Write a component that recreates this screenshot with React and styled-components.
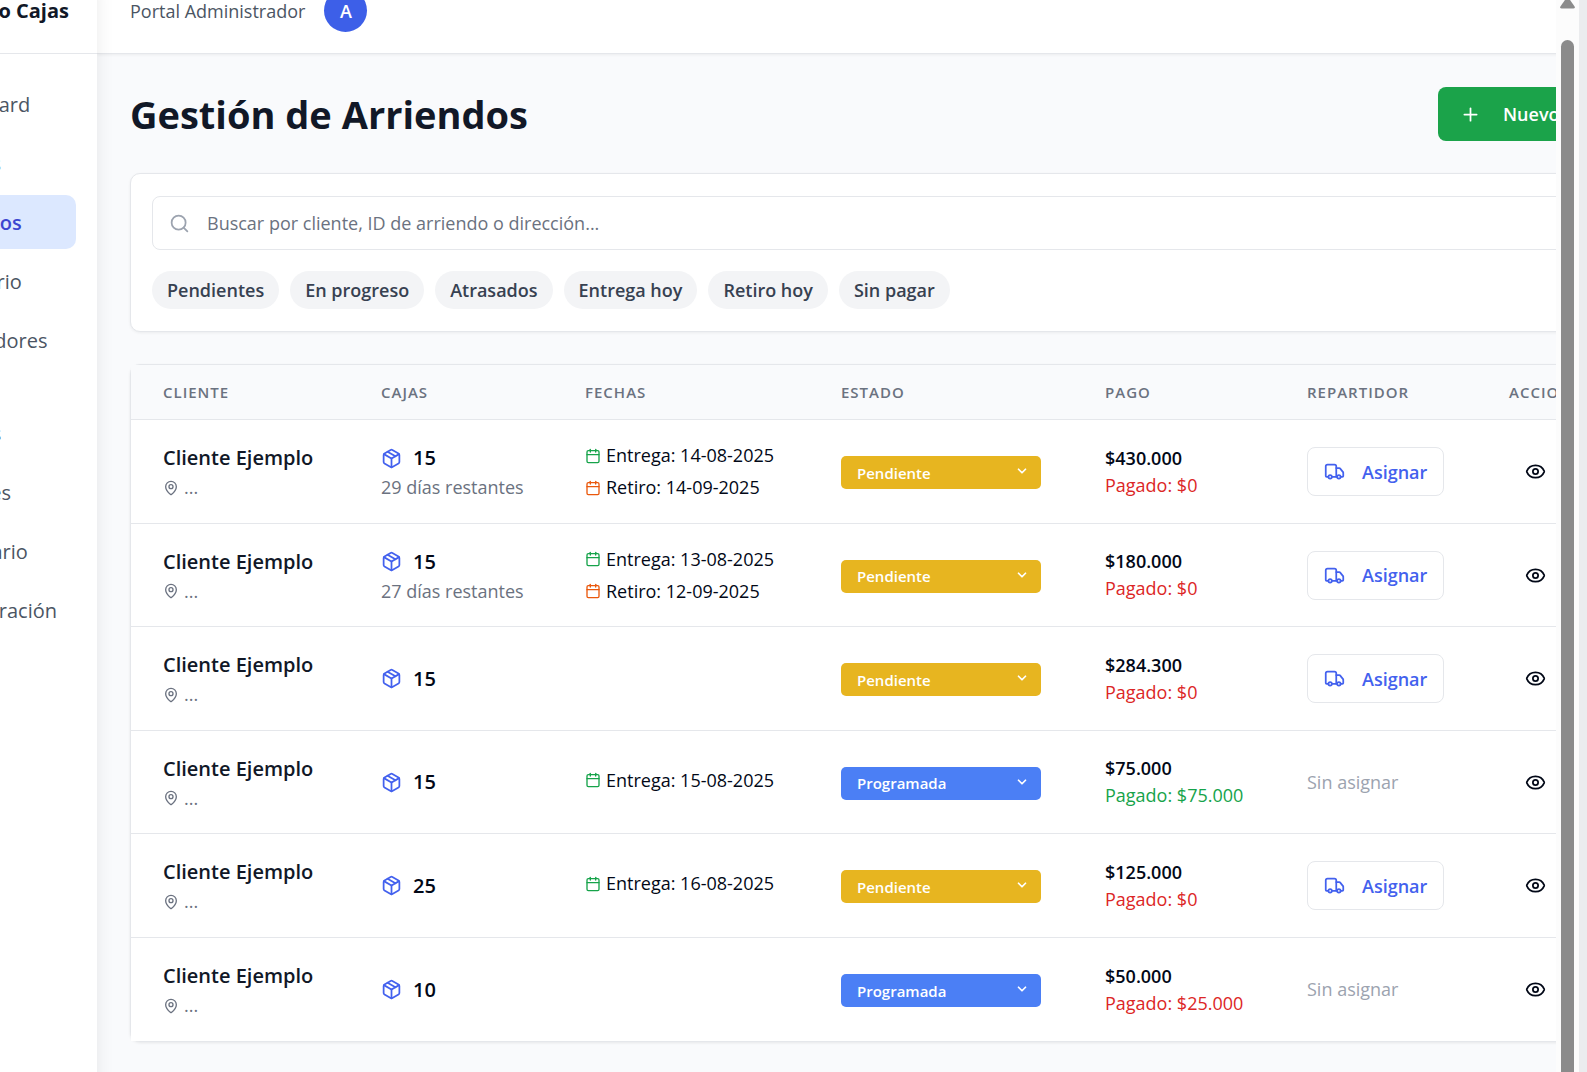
import React from "react";
import styled, { createGlobalStyle } from "styled-components";
import {
  Calendar,
  ChevronDown,
  Eye,
  MapPin,
  Package,
  Plus,
  Search,
  Truck,
} from "lucide-react";

const GlobalStyle = createGlobalStyle`
  *, *::before, *::after { box-sizing: border-box; }
  body {
    margin: 0;
    font-family: "Open Sans", "Noto Sans", sans-serif;
    color: #020817;
    background: #f9fafb;
  }
  button, input, select { font-family: inherit; }
  svg { flex: none; }
`;

const Window = styled.div`
  display: flex;
  height: 100vh;
  overflow: hidden;
`;

const ScrollArea = styled.div`
  flex: 1;
  min-width: 0;
  overflow: hidden;
  background: #f9fafc;
`;

const Page = styled.div`
  display: flex;
  min-height: 100vh;
  margin: -32px -137px 0 -244px;
`;

const Sidebar = styled.aside`
  flex: none;
  width: 341px;
  min-height: 110vh;
  background: #fff;
  box-shadow: 0 12px 20px -4px rgba(0, 0, 0, 0.12);
  z-index: 1;
`;

const Brand = styled.div`
  display: flex;
  align-items: center;
  justify-content: flex-end;
  height: 86px;
  padding-right: 28px;
  border-bottom: 1px solid #e5e7eb;
  font-size: 20px;
  font-weight: 700;
  color: #111827;
`;

const Nav = styled.nav`
  display: flex;
  flex-direction: column;
  gap: 39px;
  padding: 23px 21px;
`;

const NavGroup = styled.div`
  display: flex;
  flex-direction: column;
  gap: 5px;
`;

const NavLink = styled.a`
  display: flex;
  align-items: center;
  height: 54px;
  padding-left: 150px;
  border-radius: 10px;
  font-size: 20px;
  text-decoration: none;
  font-weight: ${(p) => (p.$active ? 600 : 400)};
  color: ${(p) => (p.$active ? "#3b46d0" : "#4b5563")};
  background: ${(p) => (p.$active ? "#dce8ff" : "transparent")};
`;

const Content = styled.div`
  flex: 1;
  min-width: 0;
`;

const Topbar = styled.header`
  display: flex;
  align-items: center;
  gap: 19px;
  height: 86px;
  padding: 0 33px;
  background: #fff;
  border-bottom: 1px solid #e5e7eb;
  box-shadow: 0 1px 3px rgba(0, 0, 0, 0.06);
  font-size: 18px;
  color: #4b5563;
`;

const Avatar = styled.span`
  display: grid;
  place-items: center;
  width: 43px;
  height: 43px;
  border-radius: 50%;
  background: #3d5fe8;
  color: #fff;
  font-weight: 600;
`;

const Main = styled.main`
  display: flex;
  flex-direction: column;
  gap: 32px;
  padding: 33px;
`;

const TitleRow = styled.div`
  display: flex;
  align-items: center;
  justify-content: space-between;
`;

const Title = styled.h1`
  margin: 0;
  font-size: 38px;
  line-height: 54px;
  font-weight: 700;
  color: #111827;
`;

const NewButton = styled.button`
  display: flex;
  align-items: center;
  gap: 22px;
  width: 222px;
  height: 54px;
  padding: 0 22px;
  border: 0;
  border-radius: 8px;
  background: #1ba34a;
  color: #fff;
  font-size: 18px;
  font-weight: 600;
  white-space: nowrap;
`;

const FilterCard = styled.section`
  padding: 22px 21px;
  background: #fff;
  border: 1px solid #e5e7eb;
  border-radius: 10px;
  box-shadow: 0 1px 3px rgba(0, 0, 0, 0.06);
`;

const SearchBox = styled.label`
  display: flex;
  align-items: center;
  gap: 17px;
  height: 54px;
  padding: 0 16px;
  border: 1px solid #e5e7eb;
  border-radius: 8px;
  color: #9ca3af;
`;

const SearchInput = styled.input`
  flex: 1;
  border: 0;
  padding: 0;
  outline: 0;
  background: transparent;
  font-size: 18px;
  color: #111827;
  &::placeholder { color: #6b7280; opacity: 1; }
`;

const Chips = styled.div`
  display: flex;
  gap: 11px;
  margin-top: 21px;
`;

const Chip = styled.button`
  height: 38px;
  padding: 0 15px;
  border: 0;
  border-radius: 19px;
  background: #f3f4f6;
  color: #374151;
  font-size: 18px;
  font-weight: 600;
`;

const TableCard = styled.section`
  border: 1px solid #e5e7eb;
  border-radius: 10px;
  background: #fff;
  box-shadow: 0 1px 3px rgba(0, 0, 0, 0.08);
`;

const Table = styled.table`
  width: 100%;
  table-layout: fixed;
  border-collapse: separate;
  border-spacing: 0;
`;

const Col = styled.col`
  width: ${(p) => (p.$width ? `${p.$width}px` : "auto")};
`;

const HeadCell = styled.th`
  height: 55px;
  padding: 0 32px;
  border-bottom: 1px solid #e5e7eb;
  background: #f9fafc;
  text-align: left;
  font-size: 15px;
  font-weight: 600;
  letter-spacing: 1px;
  color: #6b7280;
`;

const Cell = styled.td`
  height: 104px;
  padding: 0 32px;
  background: #fff;
  vertical-align: middle;
  white-space: nowrap;
`;

const Row = styled.tr`
  &:nth-child(even) > td { height: 103px; }
  &:not(:last-child) > td { border-bottom: 1px solid #e5e7eb; }
`;

const Line = styled.div`
  display: flex;
  align-items: center;
  gap: ${(p) => p.$gap || 0}px;
  font-size: ${(p) => (p.$large ? 20 : 18)}px;
  line-height: ${(p) => (p.$large ? 32 : 27)}px;
  font-weight: ${(p) => (p.$strong ? 600 : 400)};
  color: ${(p) => p.$color || "#020817"};
`;

const DateList = styled.div`
  display: flex;
  flex-direction: column;
  gap: 5px;
  > :only-child { padding-bottom: 4px; }
`;

const Tint = styled.span`
  display: flex;
  color: ${(p) => p.$color};
`;

const StatusBox = styled.div`
  position: relative;
  height: 33px;
  margin-top: 2px;
`;

const StatusSelect = styled.select`
  appearance: none;
  width: 100%;
  height: 33px;
  padding: 0 16px;
  border: 0;
  border-radius: 5px;
  background: ${(p) => (p.$status === "Pendiente" ? "#e7b520" : "#4b7ff5")};
  color: #fff;
  font-size: 15px;
  font-weight: 600;
`;

const StatusArrow = styled.span`
  position: absolute;
  top: 8px;
  right: 12px;
  display: flex;
  color: #fff;
  pointer-events: none;
`;

const AssignButton = styled.button`
  display: flex;
  align-items: center;
  gap: 17px;
  width: 137px;
  height: 49px;
  padding: 0 16px;
  border: 1px solid #e5e7eb;
  border-radius: 8px;
  background: #fff;
  color: #4361ee;
  font-size: 18px;
  font-weight: 600;
`;

const IconButton = styled.button`
  display: flex;
  padding: 0 16px;
  border: 0;
  background: none;
  color: #020817;
`;

const BarTrack = styled.div`
  flex: none;
  display: flex;
  flex-direction: column;
  align-items: center;
  gap: 31px;
  width: 23px;
  background: #fcfcfc;
`;

const BarThumb = styled.div`
  flex: 1;
  width: 13px;
  border-radius: 7px 7px 0 0;
  background: #8b8b8b;
`;

const WindowEdge = styled.div`
  flex: none;
  width: 8px;
  background: #ebecee;
`;

const navGroups = [
  ["Dashboard", "Clientes", "Arriendos", "Inventario", "Repartidores"],
  ["Pedidos", "Reportes", "Calendario", "Configuración"],
];

const filters = [
  "Pendientes",
  "En progreso",
  "Atrasados",
  "Entrega hoy",
  "Retiro hoy",
  "Sin pagar",
];

const columns = [
  ["CLIENTE", 218],
  ["CAJAS", 204],
  ["FECHAS", 256],
  ["ESTADO", 264],
  ["PAGO", 202],
  ["REPARTIDOR", 202],
  ["ACCIONES", 0],
];

const rentals = [
  { boxes: 15, left: "29 días restantes", out: "14-08-2025", back: "14-09-2025", status: "Pendiente", total: "$430.000", paid: "$0" },
  { boxes: 15, left: "27 días restantes", out: "13-08-2025", back: "12-09-2025", status: "Pendiente", total: "$180.000", paid: "$0" },
  { boxes: 15, status: "Pendiente", total: "$284.300", paid: "$0" },
  { boxes: 15, out: "15-08-2025", status: "Programada", total: "$75.000", paid: "$75.000" },
  { boxes: 25, out: "16-08-2025", status: "Pendiente", total: "$125.000", paid: "$0" },
  { boxes: 10, status: "Programada", total: "$50.000", paid: "$25.000" },
];

function RentalRow({ rental }) {
  const settled = rental.total === rental.paid;
  return (
    <Row>
      <Cell>
        <Line $large $strong $color="#111827">Cliente Ejemplo</Line>
        <Line $gap={5} $color="#6b7280">
          <MapPin size={16} />
          ...
        </Line>
      </Cell>
      <Cell>
        <Line $large $strong $gap={11}>
          <Tint $color="#4361ee"><Package size={21} /></Tint>
          {rental.boxes}
        </Line>
        {rental.left && <Line $color="#6b7280">{rental.left}</Line>}
      </Cell>
      <Cell>
        <DateList>
          {rental.out && (
            <Line $gap={5}>
              <Tint $color="#16a34a"><Calendar size={16} /></Tint>
              Entrega: {rental.out}
            </Line>
          )}
          {rental.back && (
            <Line $gap={5}>
              <Tint $color="#ea580c"><Calendar size={16} /></Tint>
              Retiro: {rental.back}
            </Line>
          )}
        </DateList>
      </Cell>
      <Cell>
        <StatusBox>
          <StatusSelect aria-label="Estado" defaultValue={rental.status} $status={rental.status}>
            <option>Pendiente</option>
            <option>Programada</option>
          </StatusSelect>
          <StatusArrow><ChevronDown size={14} strokeWidth={3} /></StatusArrow>
        </StatusBox>
      </Cell>
      <Cell>
        <Line $strong>{rental.total}</Line>
        <Line $color={settled ? "#16a34a" : "#dc2626"}>Pagado: {rental.paid}</Line>
      </Cell>
      <Cell>
        {rental.status === "Pendiente" ? (
          <AssignButton type="button"><Truck size={21} />Asignar</AssignButton>
        ) : (
          <Line $color="#9ca3af">Sin asignar</Line>
        )}
      </Cell>
      <Cell>
        <IconButton type="button" aria-label="Ver arriendo"><Eye size={21} /></IconButton>
      </Cell>
    </Row>
  );
}

export default function App() {
  return (
    <>
      <GlobalStyle />
      <Window>
        <ScrollArea>
          <Page>
            <Sidebar>
              <Brand>Arriendo Cajas</Brand>
              <Nav>
                {navGroups.map((group) => (
                  <NavGroup key={group[0]}>
                    {group.map((label) => (
                      <NavLink key={label} href="#" $active={label === "Arriendos"}>
                        {label}
                      </NavLink>
                    ))}
                  </NavGroup>
                ))}
              </Nav>
            </Sidebar>
            <Content>
              <Topbar>
                Portal Administrador
                <Avatar>A</Avatar>
              </Topbar>
              <Main>
                <TitleRow>
                  <Title>Gestión de Arriendos</Title>
                  <NewButton type="button"><Plus size={21} />Nuevo Arriendo</NewButton>
                </TitleRow>
                <FilterCard>
                  <SearchBox>
                    <Search size={21} />
                    <SearchInput
                      type="text"
                      aria-label="Buscar arriendos"
                      placeholder="Buscar por cliente, ID de arriendo o dirección..."
                    />
                  </SearchBox>
                  <Chips>
                    {filters.map((label) => (
                      <Chip key={label} type="button">{label}</Chip>
                    ))}
                  </Chips>
                </FilterCard>
                <TableCard>
                  <Table>
                    <colgroup>
                      {columns.map(([name, width]) => <Col key={name} $width={width} />)}
                    </colgroup>
                    <thead>
                      <tr>
                        {columns.map(([name]) => (
                          <HeadCell key={name}>{name}</HeadCell>
                        ))}
                      </tr>
                    </thead>
                    <tbody>
                      {rentals.map((rental) => (
                        <RentalRow key={rental.total} rental={rental} />
                      ))}
                    </tbody>
                  </Table>
                </TableCard>
              </Main>
            </Content>
          </Page>
        </ScrollArea>
        <BarTrack>
          <svg width="15" height="9" viewBox="0 0 15 9" fill="#8b8b8b">
            <path d="M6 -1.500L0.400 6.400Q-0.300 8.500 1.800 8.500H13.200Q15.300 8.500 14.600 6.400L9 -1.500Z" />
          </svg>
          <BarThumb />
        </BarTrack>
        <WindowEdge />
      </Window>
    </>
  );
}
